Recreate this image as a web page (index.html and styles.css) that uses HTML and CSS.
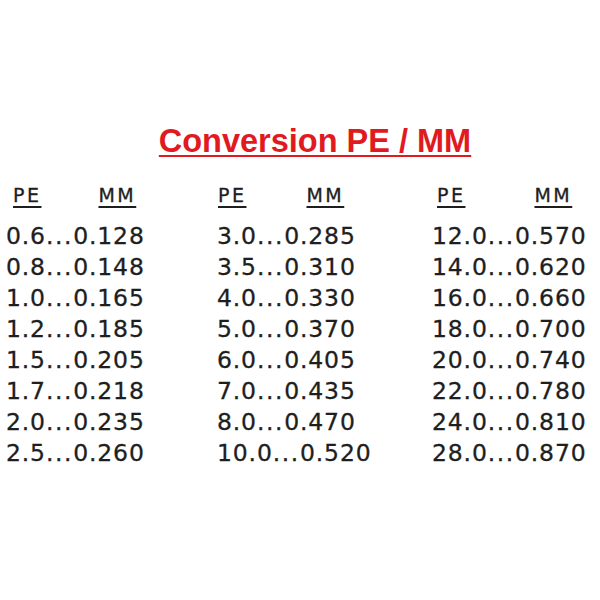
FILE: index.html
```html
<!DOCTYPE html>
<html>
<head>
<meta charset="utf-8">
<link rel="stylesheet" href="styles.css">
</head>
<body>
<div class="page">
  <h1 class="title">Conversion PE / MM</h1>
  <div class="table">
    <div class="col c1">
      <div class="head"><span class="pe">PE</span><span class="mm">MM</span></div>
      <ul class="vals">
        <li>0.6<span class="dots">...</span>0.128</li><li>0.8<span class="dots">...</span>0.148</li>
        <li>1.0<span class="dots">...</span>0.165</li><li>1.2<span class="dots">...</span>0.185</li>
        <li>1.5<span class="dots">...</span>0.205</li><li>1.7<span class="dots">...</span>0.218</li>
        <li>2.0<span class="dots">...</span>0.235</li><li>2.5<span class="dots">...</span>0.260</li>
      </ul>
    </div>
    <div class="col c2">
      <div class="head"><span class="pe">PE</span><span class="mm">MM</span></div>
      <ul class="vals">
        <li>3.0<span class="dots">...</span>0.285</li><li>3.5<span class="dots">...</span>0.310</li>
        <li>4.0<span class="dots">...</span>0.330</li><li>5.0<span class="dots">...</span>0.370</li>
        <li>6.0<span class="dots">...</span>0.405</li><li>7.0<span class="dots">...</span>0.435</li>
        <li>8.0<span class="dots">...</span>0.470</li><li>10.0<span class="dots">...</span>0.520</li>
      </ul>
    </div>
    <div class="col c3">
      <div class="head"><span class="pe">PE</span><span class="mm">MM</span></div>
      <ul class="vals">
        <li>12.0<span class="dots">...</span>0.570</li><li>14.0<span class="dots">...</span>0.620</li>
        <li>16.0<span class="dots">...</span>0.660</li><li>18.0<span class="dots">...</span>0.700</li>
        <li>20.0<span class="dots">...</span>0.740</li><li>22.0<span class="dots">...</span>0.780</li>
        <li>24.0<span class="dots">...</span>0.810</li><li>28.0<span class="dots">...</span>0.870</li>
      </ul>
    </div>
  </div>
</div>
</body>
</html>
```

FILE: styles.css
```css
html, body { margin: 0; padding: 0; background: #fff; }
.page { width: 600px; height: 600px; padding-top: 121px; box-sizing: border-box; }
.title {
  margin: 0 0 0 30px;
  text-align: center;
  font-family: "Liberation Sans", Arial, sans-serif;
  font-weight: bold;
  font-size: 32.5px;
  line-height: 40px;
  height: 40px;
  color: #e01a1f;
  text-decoration: underline;
  text-decoration-thickness: 2px;
  text-underline-offset: 3px;
}
.table { display: grid; grid-template-columns: 211px 215px 174px; padding-left: 6px; margin-top: 22px; }
.col { font-family: "DejaVu Sans", Verdana, sans-serif; color: #1e1e1e; -webkit-text-stroke: 0.3px #1e1e1e; }
.head { display: flex; font-size: 19px; line-height: 24px; height: 24px; letter-spacing: 2.5px; }
.head span { text-decoration: underline; text-decoration-thickness: 2px; text-underline-offset: 4px; }
.c1 .pe { margin-left: 7px; }
.c1 .mm { margin-left: 57px; }
.c2 .pe { margin-left: 1px; }
.c2 .mm { margin-left: 60px; }
.c3 .pe { margin-left: 5px; }
.c3 .mm { margin-left: 69px; }
.vals { list-style: none; margin: 13.5px 0 0; padding: 0; font-size: 23.5px; line-height: 31px; letter-spacing: 0.85px; }
.dots { letter-spacing: 1.6px; }
```
